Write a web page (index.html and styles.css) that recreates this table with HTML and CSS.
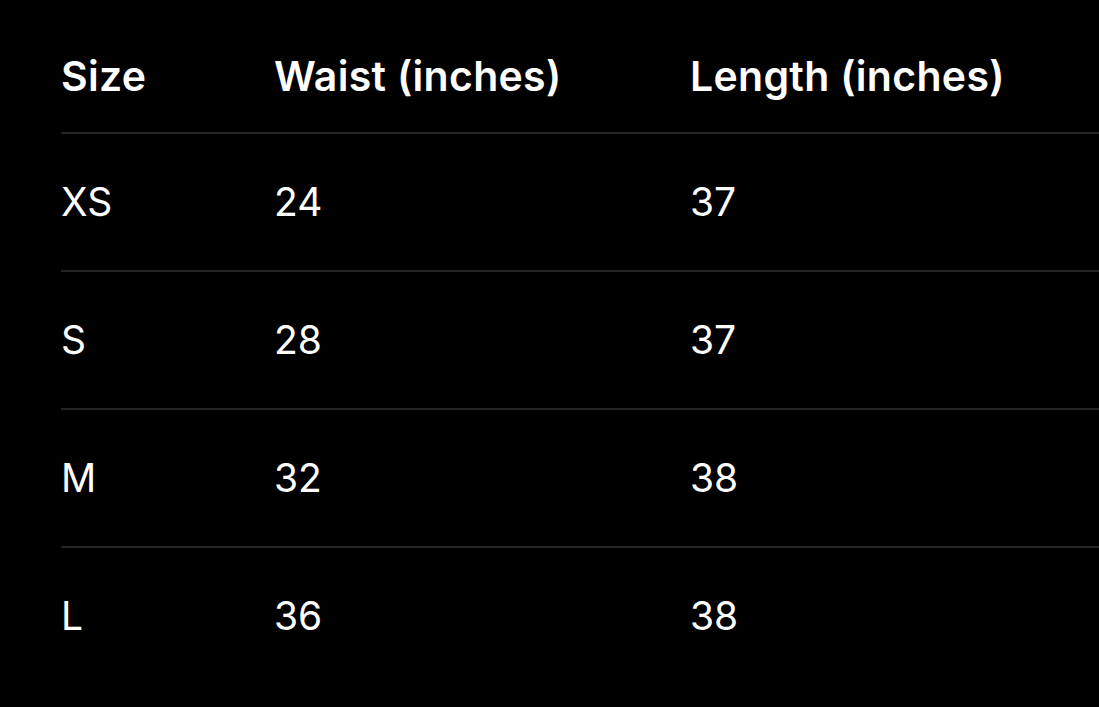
FILE: index.html
```html
<!DOCTYPE html>
<html lang="en">
<head>
<meta charset="utf-8">
<title>Size chart</title>
<link rel="stylesheet" href="styles.css">
</head>
<body>
<div class="chart">
  <div class="row head">
    <div class="cell">Size</div>
    <div class="cell">Waist (inches)</div>
    <div class="cell">Length (inches)</div>
  </div>
  <div class="row">
    <div class="cell">XS</div>
    <div class="cell">24</div>
    <div class="cell">37</div>
  </div>
  <div class="row">
    <div class="cell">S</div>
    <div class="cell">28</div>
    <div class="cell">37</div>
  </div>
  <div class="row">
    <div class="cell">M</div>
    <div class="cell">32</div>
    <div class="cell">38</div>
  </div>
  <div class="row last">
    <div class="cell">L</div>
    <div class="cell">36</div>
    <div class="cell">38</div>
  </div>
</div>
</body>
</html>
```
FILE: styles.css
```css
html, body {
  margin: 0;
  padding: 0;
  background: #000;
}
body {
  font-family: Inter, "Noto Sans", sans-serif;
  color: #fff;
  width: 1099px;
  height: 707px;
  overflow: hidden;
}
.chart {
  padding-left: 61px;
}
.row {
  display: grid;
  grid-template-columns: 213px 416px 1fr;
  align-items: center;
  height: 136px;
  border-bottom: 2px solid #262626;
  font-size: 39px;
  font-weight: 400;
}
.row.head {
  box-sizing: border-box;
  height: 134px;
  align-items: start;
  padding-top: 52px;
  font-size: 41px;
  font-weight: 600;
  letter-spacing: 0.3px;
}
.row.last {
  border-bottom: none;
}
.cell {
  white-space: nowrap;
  line-height: 48px;
}
```
